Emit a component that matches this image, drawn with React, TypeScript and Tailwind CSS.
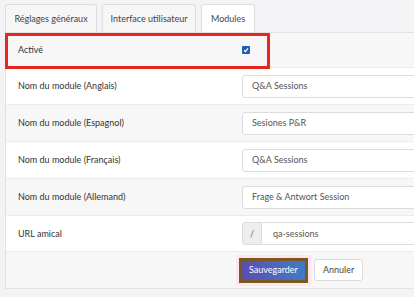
import React from 'react';

const rows = [
  { label: 'Nom du module (Anglais)', value: 'Q&A Sessions' },
  { label: 'Nom du module (Espagnol)', value: 'Sesiones P&R' },
  { label: 'Nom du module (Français)', value: 'Q&A Sessions' },
  { label: 'Nom du module (Allemand)', value: 'Frage & Antwort Session' },
];

const App: React.FC = () => {
  return (
    <div
      className="w-[414px] h-[297px] overflow-hidden bg-[#f3f3f6] pl-[5px] pt-[4px] text-[9px] text-[#333]"
      style={{ fontFamily: 'Lato, "Open Sans", sans-serif' }}
    >
      <div className="flex gap-[5px] h-[28px]">
        <div className="w-[92px] shrink-0 flex items-center justify-center border border-b-0 border-[#ddd] rounded-t-[3px] bg-[#f6f6f6] text-[#444]">
          Réglages généraux
        </div>
        <div className="w-[94px] shrink-0 flex items-center justify-center border border-b-0 border-[#ddd] rounded-t-[3px] bg-[#f6f6f6] text-[#444]">
          Interface utilisateur
        </div>
        <div className="w-[54px] shrink-0 flex items-center justify-center border border-b-0 border-[#ddd] rounded-t-[3px] bg-white text-[#444]">
          Modules
        </div>
      </div>

      <div className="w-[440px] border-l border-y border-[#e2e2e6] bg-white">
        <div className="relative h-[34px] flex items-center bg-[#f7f7f7]">
          <div className="w-[236px] shrink-0 pl-[12px]">Activé</div>
          <div className="w-[8px] h-[8px] shrink-0 rounded-[1px] bg-[#1d5fb8] flex items-center justify-center">
            <svg width="6" height="6" viewBox="0 0 6 6">
              <path d="M1 3.2 L2.4 4.6 L5 1.4" stroke="white" strokeWidth="1.3" fill="none" />
            </svg>
          </div>
          <div className="absolute left-[-1px] top-0 w-[265px] h-[36px] border-[3px] border-[#e8261e]" />
        </div>

        {rows.map((r, i) => (
          <div
            key={r.label}
            className={`h-[37px] flex items-center border-t border-[#ececef] ${i % 2 === 1 ? 'bg-[#f7f7f7]' : 'bg-white'}`}
          >
            <div className="w-[236px] shrink-0 pl-[12px]">{r.label}</div>
            <div className="w-[200px] shrink-0 h-[23px] flex items-center border border-[#dcdcdc] rounded-[3px] bg-white pl-[9px] text-[#555]">
              {r.value}
            </div>
          </div>
        ))}

        <div className="h-[36px] flex items-center border-t border-[#ececef] bg-white">
          <div className="w-[236px] shrink-0 pl-[12px]">URL amical</div>
          <div className="flex h-[23px] shrink-0">
            <div className="w-[20px] flex items-center justify-center border border-[#dcdcdc] rounded-l-[3px] bg-[#eeeeee] text-[#666]">
              /
            </div>
            <div className="w-[180px] flex items-center border border-l-0 border-[#dcdcdc] bg-white pl-[11px] text-[#555]">
              qa-sessions
            </div>
          </div>
        </div>

        <div className="h-[37px] flex items-center gap-[3px] border-t border-[#ececef] bg-[#f7f7f7] pl-[230px]">
          <div className="p-[3px] bg-[#fde6f1] rounded-[2px]">
            <button className="h-[25px] px-[7px] border-[3px] border-[#7a5a1c] bg-gradient-to-r from-[#5a4cb2] to-[#3b7cc4] text-white text-[9px]">
              Sauvegarder
            </button>
          </div>
          <button className="h-[22px] px-[8px] border border-[#dcdcdc] rounded-[3px] bg-white text-[#444] text-[9px]">
            Annuler
          </button>
        </div>
      </div>
    </div>
  );
};

export default App;
